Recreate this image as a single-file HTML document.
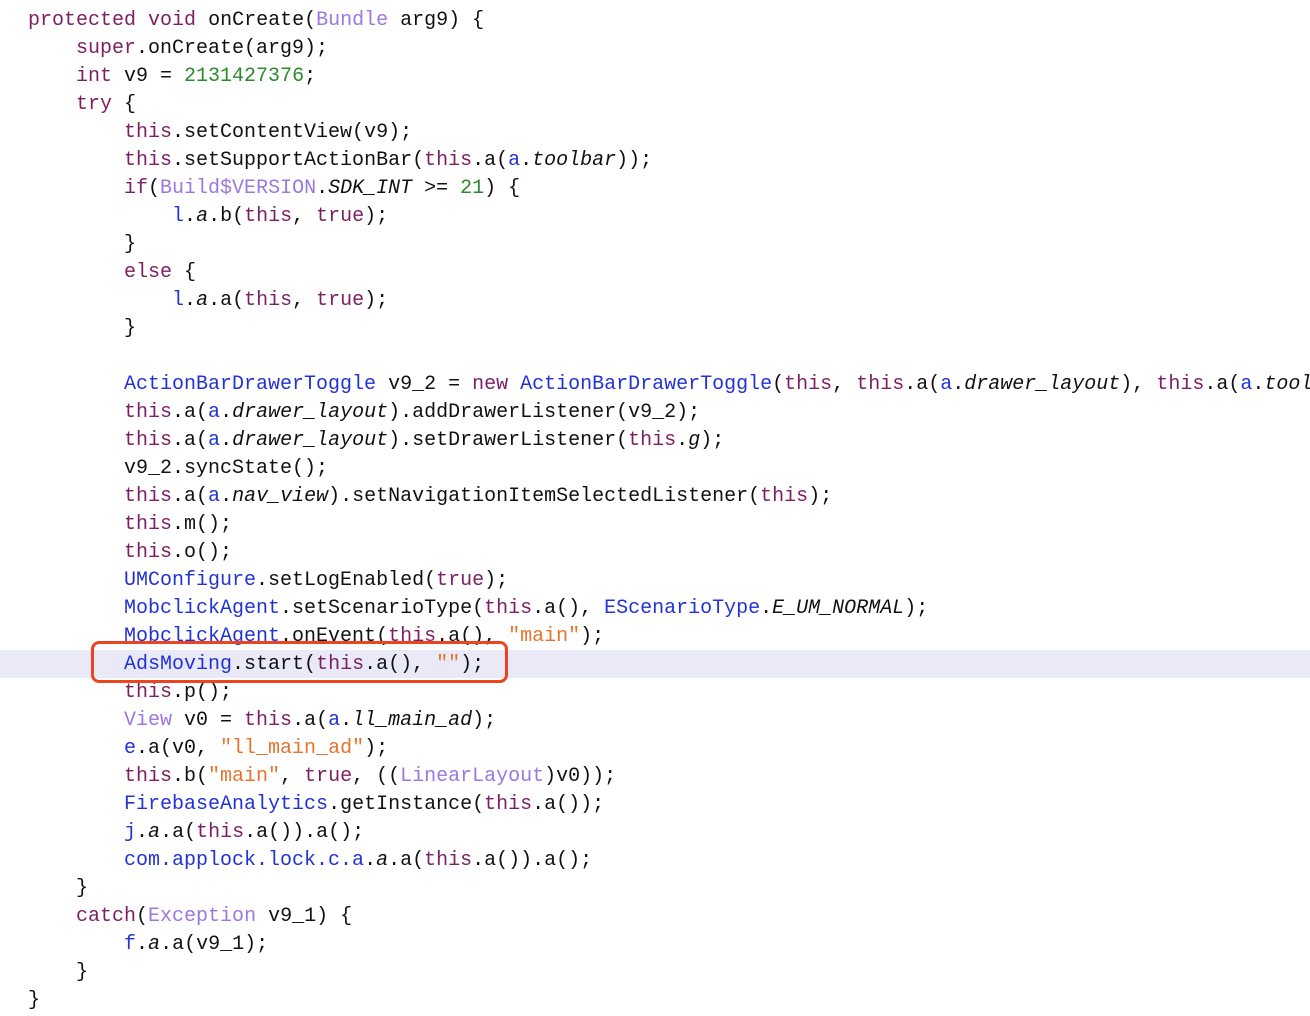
<!DOCTYPE html>
<html><head><meta charset="utf-8"><style>
body{margin:0;background:#fff;width:1310px;height:1016px;overflow:hidden;position:relative}
pre{margin:0;position:absolute;top:7px;left:28px;font-family:"Liberation Mono",monospace;font-size:20px;line-height:28px;color:#111;white-space:pre}
.k{color:#7d1f63}.c{color:#9a78e0}.b{color:#2233d6}.n{color:#2b8a2b}.s{color:#e8732c}i{font-style:italic}
.hl{position:absolute;left:0;top:650px;width:1310px;height:28px;background:#e9e9f8}
.box{position:absolute;left:91px;top:641px;width:411px;height:36px;border:3px solid #ea4420;border-radius:8px}
</style></head><body>
<div class="hl"></div>
<pre><span class="k">protected</span> <span class="k">void</span> onCreate(<span class="c">Bundle</span> arg9) {
    <span class="k">super</span>.onCreate(arg9);
    <span class="k">int</span> v9 = <span class="n">2131427376</span>;
    <span class="k">try</span> {
        <span class="k">this</span>.setContentView(v9);
        <span class="k">this</span>.setSupportActionBar(<span class="k">this</span>.a(<span class="b">a</span>.<i>toolbar</i>));
        <span class="k">if</span>(<span class="c">Build$VERSION</span>.<i>SDK_INT</i> &gt;= <span class="n">21</span>) {
            <span class="b">l</span>.<i>a</i>.b(<span class="k">this</span>, <span class="k">true</span>);
        }
        <span class="k">else</span> {
            <span class="b">l</span>.<i>a</i>.a(<span class="k">this</span>, <span class="k">true</span>);
        }

        <span class="b">ActionBarDrawerToggle</span> v9_2 = <span class="k">new</span> <span class="b">ActionBarDrawerToggle</span>(<span class="k">this</span>, <span class="k">this</span>.a(<span class="b">a</span>.<i>drawer_layout</i>), <span class="k">this</span>.a(<span class="b">a</span>.<i>toolbar</i>
        <span class="k">this</span>.a(<span class="b">a</span>.<i>drawer_layout</i>).addDrawerListener(v9_2);
        <span class="k">this</span>.a(<span class="b">a</span>.<i>drawer_layout</i>).setDrawerListener(<span class="k">this</span>.<i>g</i>);
        v9_2.syncState();
        <span class="k">this</span>.a(<span class="b">a</span>.<i>nav_view</i>).setNavigationItemSelectedListener(<span class="k">this</span>);
        <span class="k">this</span>.m();
        <span class="k">this</span>.o();
        <span class="b">UMConfigure</span>.setLogEnabled(<span class="k">true</span>);
        <span class="b">MobclickAgent</span>.setScenarioType(<span class="k">this</span>.a(), <span class="b">EScenarioType</span>.<i>E_UM_NORMAL</i>);
        <span class="b">MobclickAgent</span>.onEvent(<span class="k">this</span>.a(), <span class="s">"main"</span>);
        <span class="b">AdsMoving</span>.start(<span class="k">this</span>.a(), <span class="s">""</span>);
        <span class="k">this</span>.p();
        <span class="c">View</span> v0 = <span class="k">this</span>.a(<span class="b">a</span>.<i>ll_main_ad</i>);
        <span class="b">e</span>.a(v0, <span class="s">"ll_main_ad"</span>);
        <span class="k">this</span>.b(<span class="s">"main"</span>, <span class="k">true</span>, ((<span class="c">LinearLayout</span>)v0));
        <span class="b">FirebaseAnalytics</span>.getInstance(<span class="k">this</span>.a());
        <span class="b">j</span>.<i>a</i>.a(<span class="k">this</span>.a()).a();
        <span class="b">com.applock.lock.c.a</span>.<i>a</i>.a(<span class="k">this</span>.a()).a();
    }
    <span class="k">catch</span>(<span class="c">Exception</span> v9_1) {
        <span class="b">f</span>.<i>a</i>.a(v9_1);
    }
}</pre>
<div class="box"></div>
</body></html>
